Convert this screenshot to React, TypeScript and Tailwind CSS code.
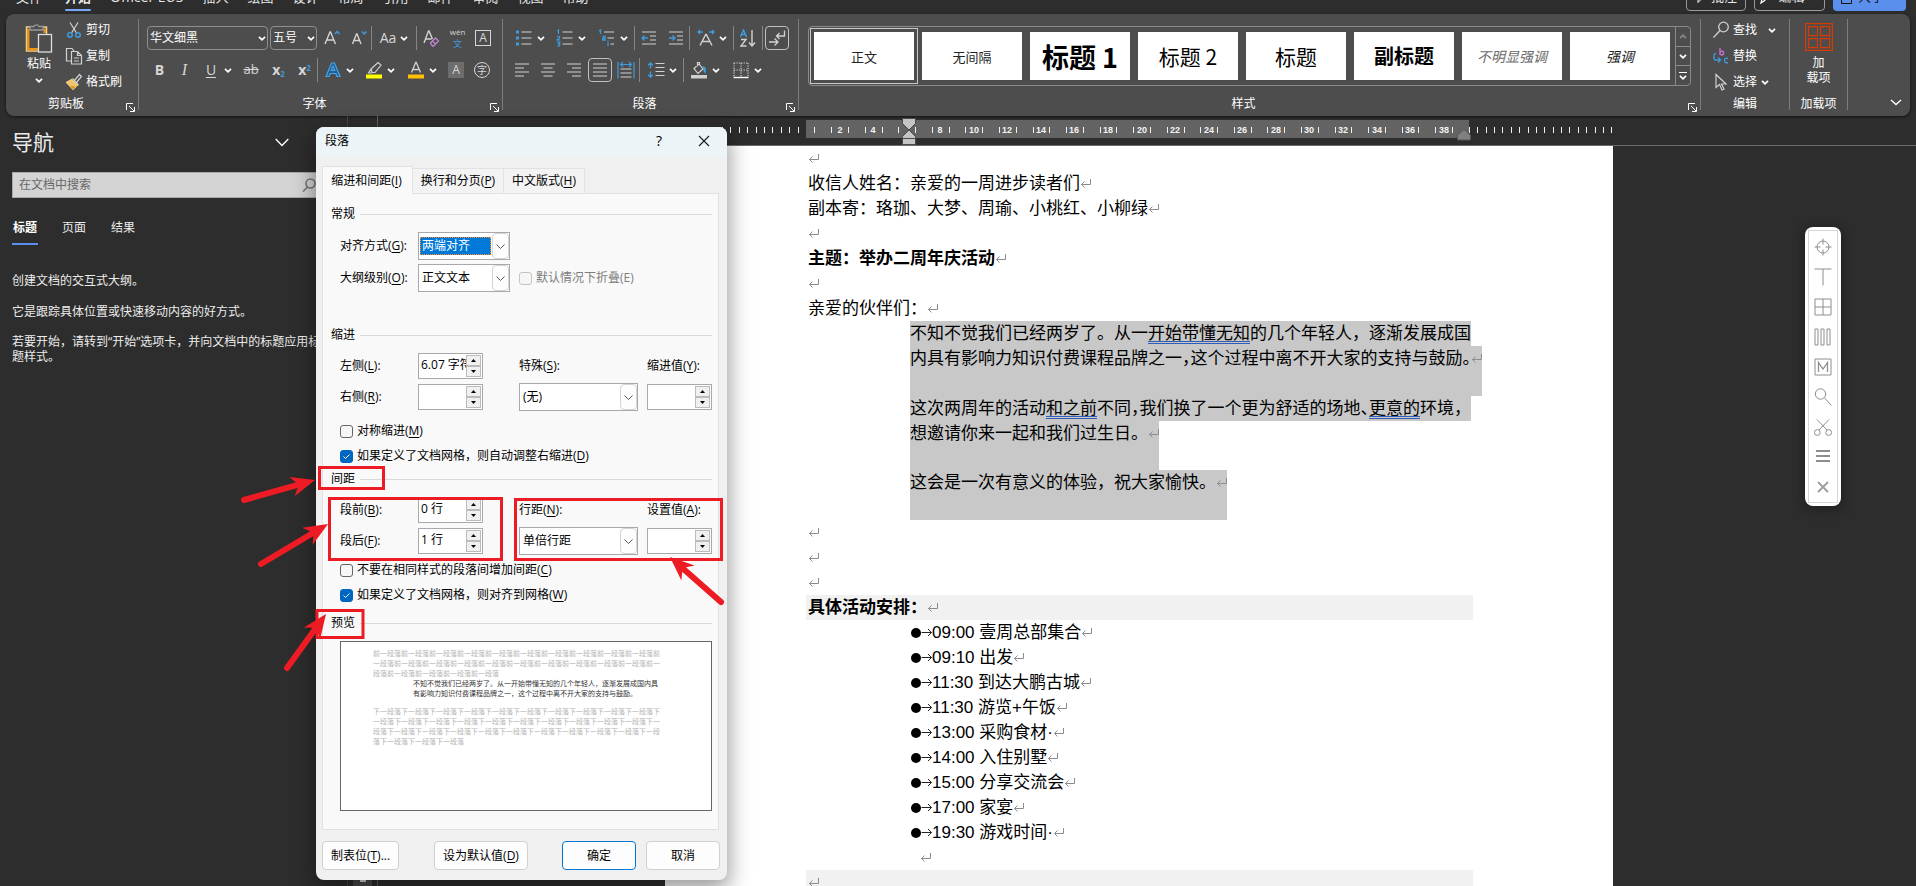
import type { ReactNode } from "react";

const UI = "font-['Open_Sans','Noto_Sans_CJK_SC',sans-serif]";
const BLUE = "#3f9bdc";
const INK = "#d2d2d2";

function Chev({ className = "text-white" }: { className?: string }) {
  return (
    <svg width="8" height="5" viewBox="0 0 8 5" className={`shrink-0 ${className}`} fill="none" stroke="currentColor" strokeWidth="1.7">
      <path d="M1 .8 4 3.8 7 .8" />
    </svg>
  );
}

function Icon({ size = 18, children }: { size?: number; children: ReactNode }) {
  return (
    <svg width={size} height={size} viewBox="0 0 18 18" fill="none" stroke={INK} strokeWidth="1.2" className="shrink-0">
      {children}
    </svg>
  );
}

function Tool({ label, w, drop, children }: { label: string; w: string; drop?: boolean; children: ReactNode }) {
  return (
    <button type="button" aria-label={label} className={`flex h-6 items-center justify-center gap-1 text-[#d6d6d6] ${w}`}>
      {children}
      {drop && <Chev />}
    </button>
  );
}

function Sep() {
  return <div className="h-6 w-px bg-[#858585]" />;
}

function GroupSep() {
  return <div className="mt-[5px] mb-1.5 w-px shrink-0 bg-[#7d7d7d]" />;
}

function Group({ label, className, launcher, children }: { label: string; className: string; launcher?: boolean; children: ReactNode }) {
  return (
    <section aria-label={label} className={`flex flex-col ${className}`}>
      <div className="flex h-[81px] min-w-0">{children}</div>
      <div className={`relative flex h-[18px] items-center justify-center text-xs text-white ${launcher ? "pr-3" : ""}`}>
        {label}
        {launcher && (
          <button type="button" aria-label={`${label}设置`} className="absolute right-[3px] bottom-px h-[9px] w-[9px]">
            <svg width="9" height="9" viewBox="0 0 9 9" fill="none" stroke="#fff" className="block">
              <path d="M.5 7V.5H7M3 3l5 5M8.500 4v4.500H4" />
            </svg>
          </button>
        )}
      </div>
    </section>
  );
}

const tabs = ["插入", "绘图", "设计", "布局", "引用", "邮件", "审阅", "视图", "帮助"];

function MenuTab({ text, active }: { text: string; active?: boolean }) {
  return (
    <a href="#" className={`flex flex-col leading-5 whitespace-nowrap ${active ? "font-bold" : ""}`}>
      {text}
      <span className={`mt-0.5 mb-[3px] h-0.5 rounded ${active ? "bg-[#7aa7f7]" : ""}`} />
    </a>
  );
}

function TopBar() {
  return (
    <header className="flex h-3.5 shrink-0 items-end justify-between overflow-hidden pr-2.5 pl-4 text-[13px] text-[#e8e8e8]">
      <nav className="flex items-end gap-[19px]">
        <MenuTab text="文件" />
        <span className="ml-1"><MenuTab text="开始" active /></span>
        <span className="text-sm"><MenuTab text="Officer EUS" /></span>
        {tabs.map((t) => (
          <MenuTab key={t} text={t} />
        ))}
      </nav>
      <div className="flex gap-2 pb-[3px]">
        <button type="button" className="flex h-7 w-[60px] items-center justify-center gap-1 rounded border border-[#9a9a9a]">
          <svg width="12" height="14" viewBox="0 0 12 14" fill="none" stroke="#fff"><path d="M.5 1.500h11v8H6l-3 3v-3H.5z" /></svg>
          批注
        </button>
        <button type="button" className="flex h-7 w-[71px] items-center justify-center gap-1.5 rounded border border-[#9a9a9a]">
          <svg width="12" height="14" viewBox="0 0 12 14" fill="none" stroke="#fff" strokeWidth="1.300"><path d="m1 13 1-4 7-7 2 2-7 7z" /></svg>
          编辑
          <Chev />
        </button>
        <button type="button" className="flex h-7 w-[73px] items-center justify-center gap-1.5 rounded bg-[#5b8fee] text-[#111]">
          <svg width="11" height="14" viewBox="0 0 11 14" fill="none" stroke="#111"><path d="M3 4H.5v9.500h10V4H8M5.500 9V1m-2 2 2-2 2 2" /></svg>
          共享
          <Chev className="text-[#111]" />
        </button>
      </div>
    </header>
  );
}

function ClipboardGroup() {
  return (
    <Group label="剪贴板" className="w-[132px] pr-0" launcher>
      <button type="button" className="mt-2 ml-[11px] flex w-11 flex-col items-center text-xs text-white">
        <svg width="28" height="32" viewBox="0 0 28 32" fill="none">
          <path d="M1.500 5h20v24h-20z" stroke="#f5cf86" strokeWidth="1.500" />
          <path d="M3.200 6.700v20.500h10M19.700 6.500V11" stroke="#e8931c" strokeWidth="2.500" />
          <path d="M5 8V4.500h4a2.700 2.700 0 0 1 5 0h4V8z" fill="#4d4d4d" stroke="#9a9a9a" strokeWidth="1.300" />
          <rect x="13.500" y="12.500" width="13" height="17.500" fill="#4d4d4d" stroke="#ddd" strokeWidth="1.300" />
        </svg>
        <span className="mt-0.5 leading-4">粘贴</span>
        <span className="mt-1.5 flex"><Chev /></span>
      </button>
      <div className="mt-[3px] ml-1 flex flex-col text-xs text-white">
        <button type="button" className="flex h-[26px] items-center gap-[3px]">
          <Icon>
            <path d="M5 1.500 11.500 12M13 1.500 6.500 12" />
            <circle cx="5" cy="14" r="2.200" stroke={BLUE} strokeWidth="1.600" />
            <circle cx="13" cy="14" r="2.200" stroke={BLUE} strokeWidth="1.600" />
          </Icon>
          剪切
        </button>
        <button type="button" className="flex h-[26px] items-center gap-[3px]">
          <Icon>
            <path d="M6 14H1.500V1.500H7L9 4" />
            <path d="M6.500 4.500h6l4 4v8.500h-10zM12.500 4.500v4h4M9 11h5M9 14h5" />
          </Icon>
          复制
        </button>
        <button type="button" className="flex h-[26px] items-center gap-[3px]">
          <Icon>
            <path d="m9.500 7.500 5-6 2 2-5 6M7.500 5.500l6 6.500" />
            <path d="M6.500 6.500 1.500 9.500 8 16.500l4.500-4.500z" fill="#f0c36d" stroke="#f5cf86" />
            <path d="m5 13 3 3.500 3-3z" fill="#e8931c" stroke="none" />
          </Icon>
          格式刷
        </button>
      </div>
    </Group>
  );
}

function FontGroup() {
  return (
    <Group label="字体" className="w-[363px]" launcher>
      <div className="flex flex-col gap-2 pt-3 pl-2">
        <div className="flex h-6 items-center">
          <div className="relative mr-0.5 w-[121px]">
            <select aria-label="字体" className="block h-6 w-full appearance-none rounded border border-[#8f8f8f] px-0.5 text-xs text-white">
              <option>华文细黑</option>
            </select>
            <span className="pointer-events-none absolute top-2.5 right-0.5"><Chev /></span>
          </div>
          <div className="relative mr-px w-[47px]">
            <select aria-label="字号" className="block h-6 w-full appearance-none rounded border border-[#8f8f8f] px-0.5 text-xs text-white">
              <option>五号</option>
            </select>
            <span className="pointer-events-none absolute top-2.5 right-0.5"><Chev /></span>
          </div>
          <Tool label="增大字号" w="w-7">
            <Icon><path d="m2 15 5-12h.5l5 12M3.500 11h7.500" strokeWidth="1.400" /><path d="M12 5l2.200-2.500L16.500 5" stroke={BLUE} strokeWidth="1.500" /></Icon>
          </Tool>
          <Tool label="减小字号" w="w-[25px]">
            <Icon><path d="m2.500 15 4-10H7l4 10M4 11.500h6" strokeWidth="1.400" /><path d="M12 2.500 14.200 5 16.500 2.500" stroke={BLUE} strokeWidth="1.500" /></Icon>
          </Tool>
          <Sep />
          <Tool label="更改大小写" w="w-11" drop><span className="text-sm">Aa</span></Tool>
          <Sep />
          <Tool label="清除格式" w="w-7">
            <Icon>
              <path d="m2 14 4.500-12H7l3.500 8M3.500 10h6" strokeWidth="1.400" />
              <path d="m8.500 14 5-5 3 3-5 5h-1z M10.500 12l3 3" stroke="#c586d8" strokeWidth="1.300" />
            </Icon>
          </Tool>
          <Tool label="拼音指南" w="w-[25px]">
            <span className="flex flex-col items-center">
              <span className="text-[8px] leading-[11px]">wén</span>
              <span className="text-[9px] leading-[13px] text-[#3f9bdc]">文</span>
            </span>
          </Tool>
          <Tool label="字符边框" w="w-[26px]">
            <span className="flex h-4 w-4 items-center justify-center border border-[#d6d6d6] text-xs leading-3">A</span>
          </Tool>
        </div>
        <div className="flex h-6 items-center">
          <Tool label="加粗" w="w-[25px]"><b className="text-sm">B</b></Tool>
          <Tool label="倾斜" w="w-[25px]"><i className="font-['Liberation_Serif',serif] text-base">I</i></Tool>
          <Tool label="下划线" w="w-10" drop><span className="px-1 text-sm leading-4 underline underline-offset-2">U</span></Tool>
          <Tool label="删除线" w="w-7"><span className="text-[13px] line-through">ab</span></Tool>
          <Tool label="下标" w="w-[27px]"><span className="text-sm font-bold">x<sub className="text-[8px] text-[#3f9bdc]">2</sub></span></Tool>
          <Tool label="上标" w="w-[25px]"><span className="text-sm font-bold">x<sup className="text-[8px] text-[#3f9bdc]">2</sup></span></Tool>
          <Sep />
          <Tool label="文本效果" w="w-[42px]" drop>
            <Icon><path d="M2 15.500 7.500 2h3L16 15.500h-3l-1.200-3H6.200l-1.200 3zM7.200 9.500h3.600L9 5z" fill="#1d5f99" stroke="#4aa5e8" strokeWidth="1.200" /></Icon>
          </Tool>
          <Tool label="突出显示" w="w-10" drop>
            <svg width="18" height="18" viewBox="0 0 18 18" fill="none" stroke={INK} strokeWidth="1.200">
              <path d="m6 8 7-6.500 3 2.500-6 7.500H7zM6 8l-2.500 4H7" />
              <path d="M1 13.500h16v4H1z" fill="#ff0" stroke="none" />
            </svg>
          </Tool>
          <Tool label="字体颜色" w="w-[43px]" drop>
            <svg width="18" height="18" viewBox="0 0 18 18" fill="none" stroke={INK} strokeWidth="1.300">
              <path d="M4.500 11.500 8.700 1.500h.6l4.200 10M6 8.500h6" />
              <path d="M1 13.500h16v4H1z" fill="#ffc000" stroke="none" />
            </svg>
          </Tool>
          <Tool label="字符底纹" w="w-[26px]"><span className="flex h-4 w-4 items-center justify-center bg-[#6d6d6d] text-xs">A</span></Tool>
          <Tool label="带圈字符" w="w-[26px]"><span className="flex h-4 w-4 items-center justify-center rounded-full border border-[#d6d6d6] text-[10px] leading-3">字</span></Tool>
        </div>
      </div>
    </Group>
  );
}

function ParagraphGroup() {
  return (
    <Group label="段落" className="w-[295px]" launcher>
      <div className="flex flex-col gap-2 pt-3 pl-1.5">
        <div className="flex h-6 items-center">
          <Tool label="项目符号" w="w-[41px]" drop>
            <Icon><path d="M6.500 3h10M6.500 9h10M6.500 15h10" strokeWidth="1" /><path d="M1 1.500h3v3H1zM1 7.500h3v3H1zM1 13.500h3v3H1z" fill={BLUE} stroke="none" /></Icon>
          </Tool>
          <Tool label="编号" w="w-[41px]" drop>
            <Icon><path d="M6.500 3h10M6.500 9h10M6.500 15h10" strokeWidth="1" /><path d="M1.500 2 2.500 1v4M1 7.500h2.500v1.500L1 11h3M1 13h3l-1.500 1.700q2 .3 1 2.300H1" stroke={BLUE} /></Icon>
          </Tool>
          <Tool label="多级列表" w="w-[43px]" drop>
            <Icon><path d="M6 3h10M9.500 9H16M12.500 15H16" strokeWidth="1" /><path d="M1 2 2.500 1v4M4.500 7.500h2.500v3.500H4.700V9.300H7M10 13.500V17M10 11.500v1" stroke={BLUE} strokeWidth="1.300" /></Icon>
          </Tool>
          <Sep />
          <Tool label="减少缩进" w="w-[27px]">
            <Icon><path d="M2 3h14M10 7h6M10 11h6M2 15h14" strokeWidth="1" /><path d="M2 9h6M4.500 6.500 2 9l2.500 2.500" stroke={BLUE} strokeWidth="1.400" /></Icon>
          </Tool>
          <Tool label="增加缩进" w="w-[27px]">
            <Icon><path d="M2 3h14M10 7h6M10 11h6M2 15h14" strokeWidth="1" /><path d="M2 9h6M5.500 6.500 8 9l-2.500 2.500" stroke={BLUE} strokeWidth="1.400" /></Icon>
          </Tool>
          <Sep />
          <Tool label="中文版式" w="w-[43px]" drop>
            <Icon><path d="M3 16.500 8.700 5.500h.6L15 16.500M5 12.500h8" strokeWidth="1.400" /><path d="M1 3h5M3 1 1 3l2 2M17 3h-5M15 1l2 2-2 2" stroke={BLUE} strokeWidth="1.300" /></Icon>
          </Tool>
          <Sep />
          <Tool label="排序" w="w-7">
            <Icon><path d="M1.500 8 4.500 1 7.500 8M2.500 5.500h4" stroke={BLUE} strokeWidth="1.500" /><path d="M2 10.500h5L2 17h5.500M13 1v16M10 13.500l3 3.500 3-3.500" strokeWidth="1.400" /></Icon>
          </Tool>
          <Sep />
          <button type="button" aria-label="显示编辑标记" className="ml-0.5 flex h-6 w-6 items-center justify-center rounded border border-[#c0c0c0]">
            <Icon><path d="M16.500 1.500V7H8.500M11.500 4 8.500 7l3 3M1 13h8.500M6.500 9.500 10 13l-3.500 3.500" strokeWidth="1.300" /></Icon>
          </button>
        </div>
        <div className="flex h-6 items-center">
          <Tool label="左对齐" w="w-[26px]"><Icon><path d="M2 3h14M2 7h9M2 11h14M2 15h9" strokeWidth="1.100" /></Icon></Tool>
          <Tool label="居中" w="w-[26px]"><Icon><path d="M2 3h14M4.500 7h9M2 11h14M4.500 15h9" strokeWidth="1.100" /></Icon></Tool>
          <Tool label="右对齐" w="w-[26px]"><Icon><path d="M2 3h14M7 7h9M2 11h14M7 15h9" strokeWidth="1.100" /></Icon></Tool>
          <button type="button" aria-label="两端对齐" className="mx-px flex h-6 w-6 items-center justify-center rounded border border-[#c0c0c0]">
            <Icon><path d="M2 3h14M2 7h14M2 11h14M2 15h14" strokeWidth="1.100" /></Icon>
          </button>
          <Tool label="分散对齐" w="w-[26px]">
            <Icon><path d="M3.500 8h11M3.500 12h11M3.500 16h11" strokeWidth="1.100" /><path d="M1 1v16.500M17 1v16.500M3.500 3.500h11M6 1 3.500 3.500 6 6M12 1l2.500 2.500L12 6" stroke={BLUE} strokeWidth="1.200" /></Icon>
          </Tool>
          <Sep />
          <Tool label="行距" w="w-[43px]" drop>
            <Icon><path d="M8.500 2.500h9M8.500 6.500h9M8.500 10.500h9M8.500 14.500h9" strokeWidth="1" /><path d="M3.500 2v5.500M1.200 4.200 3.500 2l2.300 2.200M3.500 10.500V16M1.200 13.800 3.500 16l2.300-2.200" stroke={BLUE} strokeWidth="1.400" /></Icon>
          </Tool>
          <Sep />
          <Tool label="底纹" w="w-[42px]" drop>
            <Icon><path d="m4 7.500 5-4.500 4 5-5 4.500zM7.500 5V1.500h2V4" /><path d="M13 5.500q3.500 1 2 6l-1.500-3" stroke={BLUE} fill={BLUE} /><path d="M1 14h16v3.500H1z" fill="#cfcfcf" stroke="none" /></Icon>
          </Tool>
          <Tool label="边框" w="w-[42px]" drop>
            <Icon><path d="M2 2h14M2 9h14M2 2v14M9 2v14M16 2v14" strokeDasharray="1.200 1.200" /><path d="M1.500 16.500h15" stroke="#fff" strokeWidth="1.400" /></Icon>
          </Tool>
        </div>
      </div>
    </Group>
  );
}

const styleCards = [
  { text: "正文", cls: "text-[13px] text-[#222]" },
  { text: "无间隔", cls: "text-[13px] text-[#222]" },
  { text: "标题 1", cls: "text-[27px] font-bold text-black" },
  { text: "标题 2", cls: "text-[21px] text-black" },
  { text: "标题", cls: "text-[21px] text-black" },
  { text: "副标题", cls: "text-[20px] font-bold text-black" },
  { text: "不明显强调", cls: "text-[14px] italic text-[#6a6a6a]" },
  { text: "强调", cls: "text-[14px] italic text-[#222]" },
];

function StylesGroup() {
  return (
    <Group label="样式" className="min-w-0 flex-1" launcher>
      <div className="mt-3 mr-[9px] ml-[9px] flex h-[60px] min-w-0 flex-1 rounded border border-[#8a8a8a]">
        <div className="flex min-w-0 flex-1 items-center overflow-hidden pl-px">
          {styleCards.map((s, i) => (
            <button
              key={s.text}
              type="button"
              className={`flex shrink-0 ${i === 0 ? "mr-1 h-[56px] w-[108px] border border-[#c8c8c8] p-[3px]" : "mr-2 h-12 w-[100px]"}`}
            >
              <span className={`flex h-full w-full items-center justify-center bg-white font-['Noto_Sans_CJK_SC',sans-serif] leading-none whitespace-nowrap ${s.cls}`}>{s.text}</span>
            </button>
          ))}
        </div>
        <div className="flex w-[15px] flex-col divide-y divide-[#8a8a8a] border-l border-[#8a8a8a]">
          <button type="button" aria-label="上一行" className="flex flex-1 items-center justify-center"><span className="rotate-180"><Chev className="text-[#8a8a8a]" /></span></button>
          <button type="button" aria-label="下一行" className="flex flex-1 items-center justify-center"><Chev /></button>
          <button type="button" aria-label="其他" className="flex flex-1 flex-col items-center justify-center gap-0.5"><span className="h-px w-2 bg-white" /><Chev /></button>
        </div>
      </div>
    </Group>
  );
}

function Ribbon() {
  return (
    <div className="mx-1.5 flex h-[102px] shrink-0 rounded-lg bg-[#4d4d4d] shadow-[0_1px_3px_rgba(0,0,0,0.6)]">
      <ClipboardGroup />
      <GroupSep />
      <FontGroup />
      <GroupSep />
      <ParagraphGroup />
      <GroupSep />
      <StylesGroup />
      <GroupSep />
      <Group label="编辑" className="w-[88px]">
        <div className="mt-[3px] ml-[11px] flex flex-col text-xs text-white">
          <button type="button" className="flex h-[26px] items-center gap-[3px]">
            <Icon><circle cx="11.500" cy="6" r="4.800" strokeWidth="1.300" /><path d="m8 9.500-6.500 7" strokeWidth="1.300" /></Icon>
            查找
            <span className="ml-2"><Chev /></span>
          </button>
          <button type="button" className="flex h-[26px] items-center gap-[3px]">
            <Icon>
              <path d="M8 1v7M8 5q2.500-1.500 3.500 0 .8 3-2 3L8 7" stroke="#c66fd0" strokeWidth="1.400" />
              <path d="M16 11.500q-3.500-1-3.500 2t3.500 2M4 6q-4 3-1 7h5M6 10.500l2.500 2.500L6 15.500" stroke={BLUE} strokeWidth="1.400" />
            </Icon>
            替换
          </button>
          <button type="button" className="flex h-[26px] items-center gap-[3px]">
            <Icon><path d="M4 1.500v13l3.500-3 2.500 5.500 2-1-2.500-5H14z" /></Icon>
            选择
            <span className="ml-px"><Chev /></span>
          </button>
        </div>
      </Group>
      <GroupSep />
      <Group label="加载项" className="w-[57px]">
        <button type="button" className="flex flex-1 flex-col items-center pt-[9px] text-xs leading-[15px] text-white">
          <svg width="28" height="28" viewBox="0 0 28 28" fill="none" stroke="#d83b01" strokeWidth="1.200">
            <path d="M.6.6h26.800v26.800H.6zM3.600 3.600h9v9h-9zM15.600 3.600h9v9h-9zM3.600 15.600h9v9h-9zM15.600 15.600h9v9h-9z" />
          </svg>
          <span className="mt-1">加<br />载项</span>
        </button>
      </Group>
      <GroupSep />
      <div className="flex w-[62px] items-end justify-end pr-2 pb-2.5">
        <button type="button" aria-label="折叠功能区">
          <svg width="12" height="7" viewBox="0 0 12 7" fill="none" stroke="#fff" strokeWidth="1.400"><path d="m1 1 5 4.500L11 1" /></svg>
        </button>
      </div>
    </div>
  );
}

function NavPane() {
  return (
    <aside className="flex w-[348px] shrink-0 flex-col border-r border-[#454545] pl-3 text-xs text-[#ececec]">
      <div className="mt-2 flex h-9 items-center justify-between pr-[58px]">
        <h2 className="text-[21px] leading-9">导航</h2>
        <button type="button" aria-label="导航选项">
          <svg width="14" height="9" viewBox="0 0 14 9" fill="none" stroke="#fff" strokeWidth="1.300"><path d="m.7 1 6.300 6.500L13.300 1" /></svg>
        </button>
      </div>
      <div className="relative mt-3 mr-[26px]">
        <input aria-label="在文档中搜索" placeholder="在文档中搜索" className="block h-[26px] w-full border border-[#a8a8a8] bg-[#d4d4d4] px-1.5 pb-0.5 placeholder:text-[#666]" />
        <svg width="14" height="14" viewBox="0 0 14 14" fill="none" stroke="#777" strokeWidth="1.600" className="absolute top-1.5 right-[5px]"><circle cx="8.500" cy="5.500" r="4.500" /><path d="M5.500 9 1 13.500" /></svg>
      </div>
      <div className="mt-[21px] flex gap-[23px] leading-[18px]">
        <button type="button" className="border-b-2 border-[#5b8fee] px-px pb-1.5 font-bold text-white">标题</button>
        <button type="button" className="border-b-2 border-transparent px-px pb-1.5">页面</button>
        <button type="button" className="border-b-2 border-transparent px-px pb-1.5">结果</button>
      </div>
      <p className="mt-7 leading-[15px]">创建文档的交互式大纲。</p>
      <p className="mt-4 leading-[15px]">它是跟踪具体位置或快速移动内容的好方式。</p>
      <p className="mt-[15px] mr-[18px] leading-[15px]">若要开始，请转到“开始”选项卡，并向文档中的标题应用标题样式。</p>
    </aside>
  );
}

const CHAR = 16.78;

function Ruler() {
  const zero = 141;
  const inner = Array.from({ length: 39 }, (_, i) => zero + (i + 0.5) * CHAR);
  const left = Array.from({ length: 16 }, (_, i) => zero - ((i + 1) * CHAR) / 2);
  const right = Array.from({ length: 18 }, (_, i) => zero + 39.5 * CHAR + (i * CHAR) / 2);
  const marks = [...inner, ...left, ...right];
  return (
    <svg width="948" height="29" viewBox="0 0 948 29" className="block shrink-0">
      <rect x="141" y="4" width="663" height="18" fill="#636363" />
      {marks.map((x) => (
        <rect key={x} x={Math.round(x)} y="11" width="1" height="6" fill="#f0f0f0" />
      ))}
      {Array.from({ length: 19 }, (_, i) => (i + 1) * 2)
        .filter((n) => n !== 6)
        .map((n) => (
          <text key={n} x={Math.round(zero + n * CHAR)} y="17" textAnchor="middle" fill="#f4f4f4" fontSize="9" fontWeight="bold" className="font-['Liberation_Sans',sans-serif]">
            {n}
          </text>
        ))}
      <path d="M237.500 2.500h13v5l-6.500 6.500-6.500-6.500zM244 14l6.500 6.500v8h-13v-8zM237.500 22.500h13" fill="#c4c4c4" stroke="#4a4a4a" />
      <path d="m799 13.500 6.500 5.500v5h-13v-5z" fill="#808080" stroke="#555" />
    </svg>
  );
}

function Ret({ className = "" }: { className?: string }) {
  return (
    <svg width="11" height="11" viewBox="0 0 11 11" fill="none" stroke="#8c8c8c" className={`inline-block align-baseline ${className}`}>
      <path d="M10.500 1v5.500H1.500M4.500 3.500l-3 3 3 3" />
    </svg>
  );
}

function Half({ children }: { children: ReactNode }) {
  return <span className="[font-feature-settings:'halt']">{children}</span>;
}

function Gram({ children }: { children: ReactNode }) {
  return <span className="underline decoration-[#2f5db8] decoration-double decoration-1 underline-offset-2">{children}</span>;
}

function Line({ children }: { children?: ReactNode }) {
  return <p className="h-[25px] pl-0.5 whitespace-nowrap">{children}<Ret /></p>;
}

const schedule = [
  ["09:00", "壹周总部集合"],
  ["09:10", "出发"],
  ["11:30", "到达大鹏古城"],
  ["11:30", "游览+午饭"],
  ["13:00", "采购食材·"],
  ["14:00", "入住别墅"],
  ["15:00", "分享交流会"],
  ["17:00", "家宴"],
  ["19:30", "游戏时间·"],
];

function DocumentPage() {
  return (
    <article className="w-[948px] shrink-0 bg-white pr-[140px] pl-[141px] font-['Liberation_Sans','Noto_Sans_CJK_SC',sans-serif] text-[17px] leading-[25px] text-black">
      <Line />
      <Line>收信人姓名：亲爱的一周进步读者们</Line>
      <Line>副本寄：珞珈、大梦、周瑜、小桃红、小柳绿</Line>
      <Line />
      <Line><b>主题：举办二周年庆活动</b></Line>
      <Line />
      <Line>亲爱的伙伴们：</Line>
      <div className="ml-[104px] flex flex-col items-start whitespace-nowrap">
        <p className="h-[25px] bg-[#c8c8c8]">不知不觉我们已经两岁了。从一<Gram>开始带懂无知</Gram>的几个年轻人，逐渐发展成国</p>
        <p className="h-[50px] bg-[#c8c8c8]">内具有影响力知识付费课程品牌之一<Half>，</Half>这个过程中离不开大家的支持与鼓励<Half>。</Half><Ret /></p>
        <p className="h-[25px] bg-[#c8c8c8]">这次两周年的活动<Gram>和之前</Gram>不同<Half>，</Half>我们换了一个更为舒适的场地<Half>、</Half><Gram>更意的</Gram>环境，</p>
        <p className="h-[49px] bg-[#c8c8c8]">想邀请你来一起和我们过生日。<Ret /></p>
        <p className="h-[50px] bg-[#c8c8c8]">这会是一次有意义的体验，祝大家愉快。<Ret /></p>
      </div>
      <Line />
      <Line />
      <Line />
      <p className="h-[25px] bg-[#f1f1f1] pl-0.5"><b>具体活动安排：</b><Ret /></p>
      <ul className="ml-[105px] whitespace-nowrap">
        {schedule.map(([time, what]) => (
          <li key={time + what} className="flex h-[25px] items-center">
            <span className="h-2.5 w-2.5 rounded-full bg-black" />
            <svg width="11" height="9" viewBox="0 0 11 9" fill="none" stroke="#222"><path d="M.5 4.500h10M7 1l3.500 3.500L7 8" /></svg>
            <span>{time} {what}<Ret /></span>
          </li>
        ))}
      </ul>
      <p className="h-[25px] pl-[114px]"><Ret /></p>
      <p className="h-[25px] bg-[#f1f1f1] pl-0.5"><Ret /></p>
    </article>
  );
}

function Key({ text, k, tail = "" }: { text: string; k: string; tail?: string }) {
  return (
    <>
      {text}(<u className="underline-offset-2">{k}</u>){tail}
    </>
  );
}

function Legend({ text, className = "" }: { text: string; className?: string }) {
  return (
    <div className={`mb-[9px] flex h-[18px] items-center gap-[5px] ${className}`}>
      <h3>{text}</h3>
      <span className="h-px flex-1 bg-[#dadada]" />
    </div>
  );
}

function Combo({ id, value, width, focused }: { id: string; value: string; width: string; focused?: boolean }) {
  return (
    <div className={`relative flex h-7 items-center border border-[#a9a9ad] bg-white ${width}`}>
      <select
        id={id}
        className={`ml-px h-[18px] min-w-0 flex-1 appearance-none px-0.5 leading-4 outline-none ${focused ? "mr-px border border-dotted border-[#ff8a28] bg-[#0078d7] pl-px text-white" : ""}`}
      >
        <option>{value}</option>
      </select>
      <span className="pointer-events-none flex h-[26px] w-[17px] items-center justify-center rounded-sm border border-[#d4d4d4] bg-[#fdfdfd]">
        <svg width="9" height="5" viewBox="0 0 9 5" fill="none" stroke="#555"><path d="m.5.500 4 4 4-4" /></svg>
      </span>
    </div>
  );
}

function Spin({ id, value }: { id: string; value: string }) {
  return (
    <div className="flex h-[26px] w-[65px] border border-[#a9a9ad] bg-white py-px pr-px">
      <input id={id} defaultValue={value} className="min-w-0 flex-1 pb-0.5 pl-0.5 outline-none" />
      <div className="flex w-[15px] flex-col">
        <button type="button" aria-label="增加" className="flex flex-1 items-center justify-center border border-[#bbb] bg-[#f0f0f0]">
          <svg width="5" height="3" viewBox="0 0 5 3"><path d="M2.500 0 5 3H0z" /></svg>
        </button>
        <button type="button" aria-label="减少" className="flex flex-1 items-center justify-center border border-[#bbb] bg-[#f0f0f0]">
          <svg width="5" height="3" viewBox="0 0 5 3"><path d="M2.500 3 0 0h5z" /></svg>
        </button>
      </div>
    </div>
  );
}

function Check({ checked, disabled, className = "", children }: { checked?: boolean; disabled?: boolean; className?: string; children: ReactNode }) {
  return (
    <label className={`flex h-5 items-center gap-1 ${disabled ? "text-[#7d7d7d]" : ""} ${className}`}>
      <span className="relative flex h-[13px] w-[13px]">
        <input
          type="checkbox"
          defaultChecked={checked}
          disabled={disabled}
          className="h-[13px] w-[13px] appearance-none rounded-[3px] border border-[#666] bg-[#f6f6f6] checked:border-[#0067c0] checked:bg-[#0067c0] disabled:border-[#c4c4c4]"
        />
        {checked && (
          <svg width="13" height="13" viewBox="0 0 13 13" fill="none" stroke="#fff" className="pointer-events-none absolute inset-0"><path d="m3.500 6.500 2 2 4-4" /></svg>
        )}
      </span>
      <span>{children}</span>
    </label>
  );
}

function Arrow({ x1, y1, x2, y2 }: { x1: number; y1: number; x2: number; y2: number }) {
  const len = Math.hypot(x2 - x1, y2 - y1);
  const ux = (x1 - x2) / len;
  const uy = (y1 - y2) / len;
  const at = (along: number, side: number) => `${x2 + ux * along - uy * side},${y2 + uy * along + ux * side}`;
  return (
    <g fill="#ed1c24" stroke="none">
      <polygon points={`${x2},${y2} ${at(24, 10)} ${at(19, 3)} ${at(19, -3)} ${at(24, -10)}`} />
      <line x1={x1} y1={y1} x2={x2 + ux * 18} y2={y2 + uy * 18} stroke="#ed1c24" strokeWidth="6" strokeLinecap="round" />
    </g>
  );
}

function Annotations() {
  return (
    <svg width="411" height="753" viewBox="0 0 411 753" fill="none" stroke="#ed1c24" strokeWidth="3" className="pointer-events-none absolute inset-0 overflow-visible" aria-hidden="true">
      <rect x="3.500" y="340.500" width="64" height="21" />
      <rect x="13.500" y="371.500" width="172" height="61" />
      <rect x="199.500" y="372.500" width="206" height="60" />
      <rect x="1" y="483.500" width="46" height="27" />
      <Arrow x1={-72} y1={373} x2={-1} y2={353} />
      <Arrow x1={-55} y1={437} x2={12} y2={397} />
      <Arrow x1={-29} y1={541} x2={10} y2={487} />
      <Arrow x1={405} y1={475} x2={354} y2={430} />
    </svg>
  );
}

function ParagraphDialog() {
  const push = "rounded border border-[#d0d0d0] bg-[#fdfdfd] h-[29px]";
  return (
    <div role="dialog" aria-label="段落" className="absolute top-[127px] left-[316px] w-[411px] rounded-lg bg-[#f0f0f0] text-xs text-black shadow-[0_8px_22px_2px_rgba(0,0,0,0.4)]">
      <div className="flex h-[30px] items-center rounded-t-lg bg-[#ecf4f8] pr-[17px] pb-0.5 pl-[9px]">
        <h2 className="flex-1">段落</h2>
        <button type="button" aria-label="帮助" className="mr-[31px] w-4 text-center text-sm">?</button>
        <button type="button" aria-label="关闭">
          <svg width="12" height="12" viewBox="0 0 12 12" fill="none" stroke="#222" strokeWidth="1.200"><path d="m1 1 10 10M11 1 1 11" /></svg>
        </button>
      </div>
      <div className="flex items-end px-1.5 pt-[9px]">
        <button type="button" className="relative -mb-px h-7 w-[91px] border border-b-0 border-[#e2e2e2] bg-[#f9f9f9] pr-0.5"><Key text="缩进和间距" k="I" /></button>
        <button type="button" className="h-[25px] w-[91px] border-t border-r border-[#e2e2e2] bg-[#f3f3f3]"><Key text="换行和分页" k="P" /></button>
        <button type="button" className="h-[25px] w-[81px] border-t border-r border-[#e2e2e2] bg-[#f3f3f3]"><Key text="中文版式" k="H" /></button>
      </div>
      <form className="mr-2 ml-1.5 border border-[#e2e2e2] bg-[#f9f9f9] pt-[11px] pr-1.5 pb-[18px] pl-2" onSubmit={(e) => e.preventDefault()}>
        <Legend text="常规" />
        <div className="ml-[9px] grid grid-cols-[78px_101px_1fr] items-center gap-y-1">
          <label htmlFor="align"><Key text="对齐方式" k="G" tail=":" /></label>
          <Combo id="align" value="两端对齐" width="w-[92px]" focused />
          <span />
          <label htmlFor="outline"><Key text="大纲级别" k="O" tail=":" /></label>
          <Combo id="outline" value="正文文本" width="w-[92px]" />
          <Check disabled>默认情况下折叠(E)</Check>
        </div>
        <Legend text="缩进" className="mt-[34px]" />
        <div className="ml-[9px] grid grid-cols-[78px_101px_128px_65px] items-center gap-y-1">
          <label htmlFor="left"><Key text="左侧" k="L" tail=":" /></label>
          <Spin id="left" value="6.07 字符" />
          <label htmlFor="special"><Key text="特殊" k="S" tail=":" /></label>
          <label htmlFor="by"><Key text="缩进值" k="Y" tail=":" /></label>
          <label htmlFor="right"><Key text="右侧" k="R" tail=":" /></label>
          <Spin id="right" value="" />
          <Combo id="special" value="(无)" width="w-[119px]" />
          <Spin id="by" value="" />
        </div>
        <div className="mt-2.5 ml-[9px] flex flex-col items-start gap-[5px]">
          <Check><Key text="对称缩进" k="M" /></Check>
          <Check checked><Key text="如果定义了文档网格，则自动调整右缩进" k="D" /></Check>
        </div>
        <Legend text="间距" className="mt-1" />
        <div className="ml-[9px] grid grid-cols-[78px_101px_128px_65px] items-center gap-y-1">
          <label htmlFor="before"><Key text="段前" k="B" tail=":" /></label>
          <Spin id="before" value="0 行" />
          <label htmlFor="leading"><Key text="行距" k="N" tail=":" /></label>
          <label htmlFor="at"><Key text="设置值" k="A" tail=":" /></label>
          <label htmlFor="after"><Key text="段后" k="F" tail=":" /></label>
          <Spin id="after" value="1 行" />
          <Combo id="leading" value="单倍行距" width="w-[119px]" />
          <Spin id="at" value="" />
        </div>
        <div className="mt-[5px] ml-[9px] flex flex-col items-start gap-[5px]">
          <Check><Key text="不要在相同样式的段落间增加间距" k="C" /></Check>
          <Check checked><Key text="如果定义了文档网格，则对齐到网格" k="W" /></Check>
        </div>
        <Legend text="预览" className="mt-[9px]" />
        <div className="ml-[9px] h-[170px] border border-[#666] bg-white pt-[7px] pl-8 text-[7px] leading-[10px] text-[#b4b4b4]">
          <p className="w-[290px]">{"前一段落".repeat(25)}</p>
          <p className="ml-10 w-[248px] text-[#333]">不知不觉我们已经两岁了。从一开始带懂无知的几个年轻人，逐渐发展成国内具有影响力知识付费课程品牌之一，这个过程中离不开大家的支持与鼓励。</p>
          <p className="mt-2 w-[290px]">{"下一段落".repeat(34)}</p>
        </div>
      </form>
      <div className="flex px-1.5 pt-[11px] pb-2.5">
        <button type="button" className={`w-[77px] ${push}`}><Key text="制表位" k="T" tail="..." /></button>
        <button type="button" className={`ml-[35px] w-[94px] ${push}`}><Key text="设为默认值" k="D" /></button>
        <button type="button" className="ml-[34px] h-[29px] w-[74px] rounded border border-[#0078d4] bg-[#fdfdfd]">确定</button>
        <button type="button" className={`ml-2.5 w-[74px] ${push}`}>取消</button>
      </div>
      <Annotations />
    </div>
  );
}

const floatTools: { label: string; art: ReactNode }[] = [
  { label: "定位", art: <><circle cx="9" cy="9" r="6" /><path d="M9 .5v6M9 11.500v6M.5 9h6M11.500 9h6" /></> },
  { label: "文本", art: <path d="M.5 1h17M9 1v16.500" /> },
  { label: "表格", art: <path d="M1 1h16v16H1zM9 1v16M1 9h16" /> },
  { label: "分栏", art: <path d="M1 1h3v16H1zM7 1h3v16H7zM13 1h3v16h-3z" /> },
  { label: "标记", art: <><path d="M1 1h16v16H1z" /><path d="M4.500 14V4.500L9 11l4.500-6.500V14" strokeWidth="1.300" /></> },
  { label: "查找", art: <><circle cx="6.500" cy="6" r="5.200" /><path d="m10.500 10 7 7.500" /></> },
  { label: "剪切", art: <><circle cx="3.300" cy="14.500" r="2.900" /><circle cx="14.700" cy="14.500" r="2.900" /><path d="M5 12 15 1.500M13 12 3 1.500" /></> },
  { label: "菜单", art: <path d="M2 3h14M2 8h14M2 13h14" strokeWidth="1.800" /> },
  { label: "关闭", art: <path d="m4 4 10 10M14 4 4 14" stroke="#a0a0a0" strokeWidth="2" /> },
];

function FloatingBar() {
  return (
    <div className="absolute top-[227px] right-[75px] w-9 rounded-lg bg-white p-[3px] shadow-[0_2px_10px_4px_rgba(0,0,0,0.2)]">
      <div className="flex flex-col items-center gap-3 border border-[#d6d6d6] pt-[7px] pb-1.5">
        {floatTools.map((t) => (
          <button key={t.label} type="button" aria-label={t.label}>
            <svg width="18" height="18" viewBox="0 0 18 18" fill="none" stroke="#8e8e8e" className="block">{t.art}</svg>
          </button>
        ))}
      </div>
    </div>
  );
}

export default function App() {
  return (
    <div className={`relative flex h-screen flex-col overflow-hidden bg-[#2d2d2d] ${UI}`}>
      <TopBar />
      <Ribbon />
      <main className="flex min-h-0 flex-1">
        <NavPane />
        <div className="flex w-[30px] shrink-0 flex-col items-center border-r border-[#606060] pt-[31px]">
          <div className="flex w-[19px] flex-1 items-end justify-center bg-[#4a4a4a] pb-1"><span className="h-0.5 w-1.5 bg-[#ddd]" /></div>
        </div>
        <div className="flex min-w-0 flex-1 flex-col">
          <div className="flex shrink-0 justify-center border-b border-[#6a6a6a] pr-4"><Ruler /></div>
          <div className="flex min-h-0 flex-1 justify-center overflow-hidden pr-4"><DocumentPage /></div>
        </div>
      </main>
      <ParagraphDialog />
      <FloatingBar />
    </div>
  );
}
